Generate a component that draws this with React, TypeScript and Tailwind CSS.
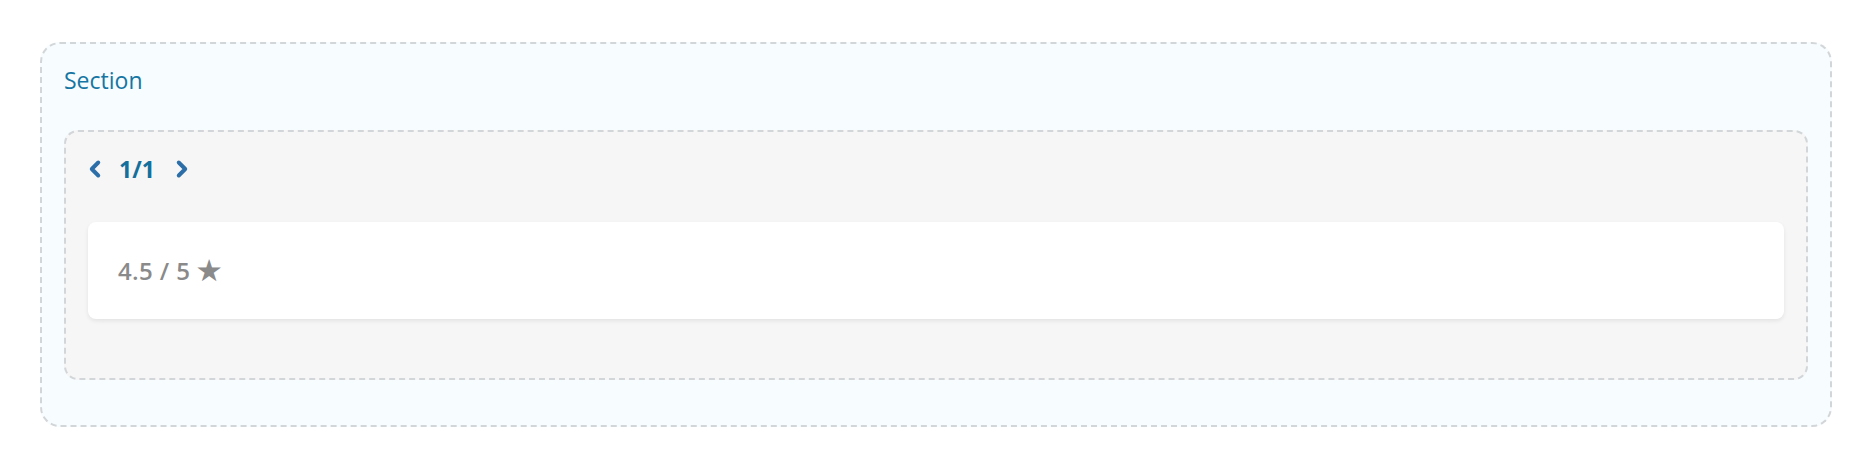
import { ChevronLeft, ChevronRight } from "lucide-react";

function Pager({ page, total }: { page: number; total: number }) {
  return (
    <div className="flex items-center h-[30px]">
      <button className="flex items-center justify-center w-[14px] text-[#2b6ea8]">
        <ChevronLeft size={26} strokeWidth={3.6} className="shrink-0" />
      </button>
      <span className="ml-[17px] text-[23px] leading-[30px] font-bold text-[#146f9c]">
        {page}/{total}
      </span>
      <button className="ml-[20px] flex items-center justify-center w-[14px] text-[#2b6ea8]">
        <ChevronRight size={26} strokeWidth={3.6} className="shrink-0" />
      </button>
    </div>
  );
}

function RatingCard({ value, max }: { value: number; max: number }) {
  return (
    <div className="h-[97px] bg-white rounded-[8px] shadow-[0_2px_4px_rgba(0,0,0,0.08)] flex items-center px-[30px]">
      <span className="text-[24px] leading-[30px] font-semibold text-[#8a8a8a] tracking-[0.4px]">
        {value} / {max} <span className="text-[27px]">★</span>
      </span>
    </div>
  );
}

export default function App() {
  return (
    <div
      className="bg-white px-10 pt-[42px] pb-[42px]"
      style={{ fontFamily: '"Open Sans", "Noto Sans", sans-serif' }}
    >
      <section className="bg-[#f7fcfe] border-2 border-dashed border-[#d3d6d9] rounded-[20px] pt-[21px] px-[22px] pb-[45px]">
        <h2 className="text-[23px] leading-[30px] text-[#1576a3]">Section</h2>

        <div className="mt-[35px] bg-[#f6f6f6] border-2 border-dashed border-[#d3d6d9] rounded-[14px] pt-[22px] px-[22px] pb-[59px]">
          <Pager page={1} total={1} />
          <div className="mt-[38px]">
            <RatingCard value={4.5} max={5} />
          </div>
        </div>
      </section>
    </div>
  );
}
